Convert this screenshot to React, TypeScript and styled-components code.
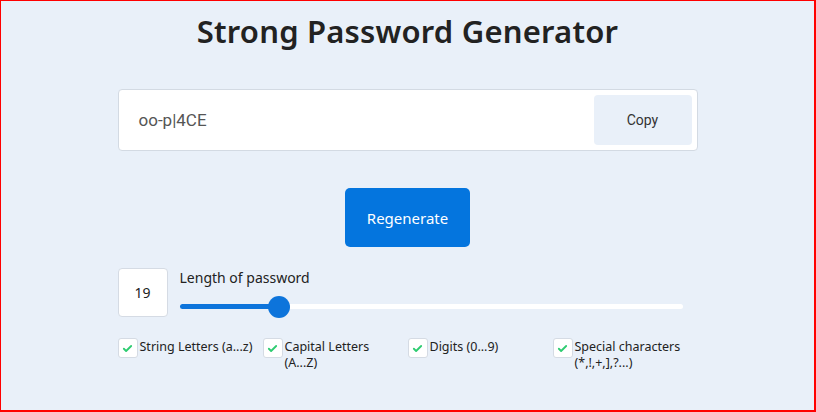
import React, { useState } from "react"
import styled, { createGlobalStyle } from "styled-components"

const GlobalStyle = createGlobalStyle`
  html, body {
    margin: 0;
    padding: 0;
  }
  body {
    font-family: "Noto Sans", "Open Sans", sans-serif;
  }
  * {
    box-sizing: border-box;
  }
`

const Frame = styled.div`
  height: 412px;
  width: 816px;
  border: 1px solid #ff0000;
  border-right-width: 2px;
  border-bottom-width: 2px;
  background: #e9f0f9;
  display: flex;
  flex-direction: column;
  align-items: center;
`

const Title = styled.h1`
  margin: 10px 0 0 0;
  font-size: 31px;
  font-weight: 600;
  line-height: 40px;
  color: #222;
  letter-spacing: 0.2px;
`

const Panel = styled.div`
  width: 580px;
  display: flex;
  flex-direction: column;
  margin-top: 38px;
`

const PasswordBox = styled.div`
  height: 62px;
  background: #fff;
  border: 1px solid #d3dae3;
  border-radius: 4px;
  display: flex;
  align-items: center;
  justify-content: space-between;
  padding: 0 5px 0 20px;
`

const PasswordText = styled.span`
  font-family: Roboto, "Liberation Sans", sans-serif;
  font-size: 17px;
  color: #555;
`

const CopyButton = styled.button`
  width: 98px;
  height: 50px;
  border: none;
  border-radius: 4px;
  background: #e9f0f9;
  font-family: Roboto, "Liberation Sans", sans-serif;
  font-size: 14px;
  color: #333;
`

const Center = styled.div`
  display: flex;
  justify-content: center;
  margin-top: 37px;
`

const RegenerateButton = styled.button`
  width: 125px;
  height: 59px;
  border: none;
  border-radius: 5px;
  background: #0475de;
  color: #fff;
  font-family: inherit;
  font-size: 15px;
`

const LengthRow = styled.div`
  display: flex;
  gap: 12px;
  margin-top: 21px;
`

const NumberBox = styled.div`
  width: 50px;
  height: 49px;
  background: #fff;
  border: 1px solid #d5dbe4;
  border-radius: 4px;
  display: flex;
  align-items: center;
  justify-content: center;
  font-size: 14px;
  color: #222;
`

const SliderArea = styled.div`
  flex: 1;
  display: flex;
  flex-direction: column;
  padding-right: 15px;
`

const Label = styled.span`
  font-size: 14px;
  color: #222;
  line-height: 20px;
`

const Track = styled.div`
  position: relative;
  height: 5px;
  margin-top: 16px;
  background: #fff;
  border-radius: 3px;
`

const Fill = styled.div`
  height: 100%;
  background: #0d74db;
  border-radius: 3px;
`

const Thumb = styled.div`
  position: absolute;
  top: 50%;
  width: 22px;
  height: 22px;
  margin: -11px 0 0 -11px;
  border-radius: 50%;
  background: #0d74db;
`

const Options = styled.div`
  display: grid;
  grid-template-columns: repeat(4, 145px);
  margin-top: 21px;
`

const Option = styled.label`
  display: flex;
  align-items: flex-start;
  gap: 2px;
  padding-right: 8px;
`

const Box = styled.span`
  flex: none;
  width: 20px;
  height: 20px;
  background: #fff;
  border: 1px solid #d5dbe4;
  border-radius: 3px;
  display: flex;
  align-items: center;
  justify-content: center;
`

const OptionText = styled.span`
  font-size: 12.5px;
  line-height: 16px;
  color: #222;
  padding-top: 1px;
`

const Check = () => (
  <svg width="11" height="11" viewBox="0 0 24 24" fill="none" stroke="#2ecc71" strokeWidth="4" strokeLinecap="round" strokeLinejoin="round">
    <path d="M4 12.5l5 5L20 6.5" />
  </svg>
)

const options = [
  "String Letters (a...z)",
  "Capital Letters (A...Z)",
  "Digits (0...9)",
  "Special characters (*,!,+,],?...)",
]

export default function App() {
  const [length] = useState(19)
  const pct = ((length - 8) / (64 - 8)) * 100 + 0.2

  return (
    <>
      <GlobalStyle />
      <Frame>
        <Title>Strong Password Generator</Title>
        <Panel>
          <PasswordBox>
            <PasswordText>oo-p|4CE</PasswordText>
            <CopyButton>Copy</CopyButton>
          </PasswordBox>
          <Center>
            <RegenerateButton>Regenerate</RegenerateButton>
          </Center>
          <LengthRow>
            <NumberBox>{length}</NumberBox>
            <SliderArea>
              <Label>Length of password</Label>
              <Track>
                <Fill style={{ width: `${pct}%` }} />
                <Thumb style={{ left: `${pct}%` }} />
              </Track>
            </SliderArea>
          </LengthRow>
          <Options>
            {options.map((o) => (
              <Option key={o}>
                <Box>
                  <Check />
                </Box>
                <OptionText>{o}</OptionText>
              </Option>
            ))}
          </Options>
        </Panel>
      </Frame>
    </>
  )
}
